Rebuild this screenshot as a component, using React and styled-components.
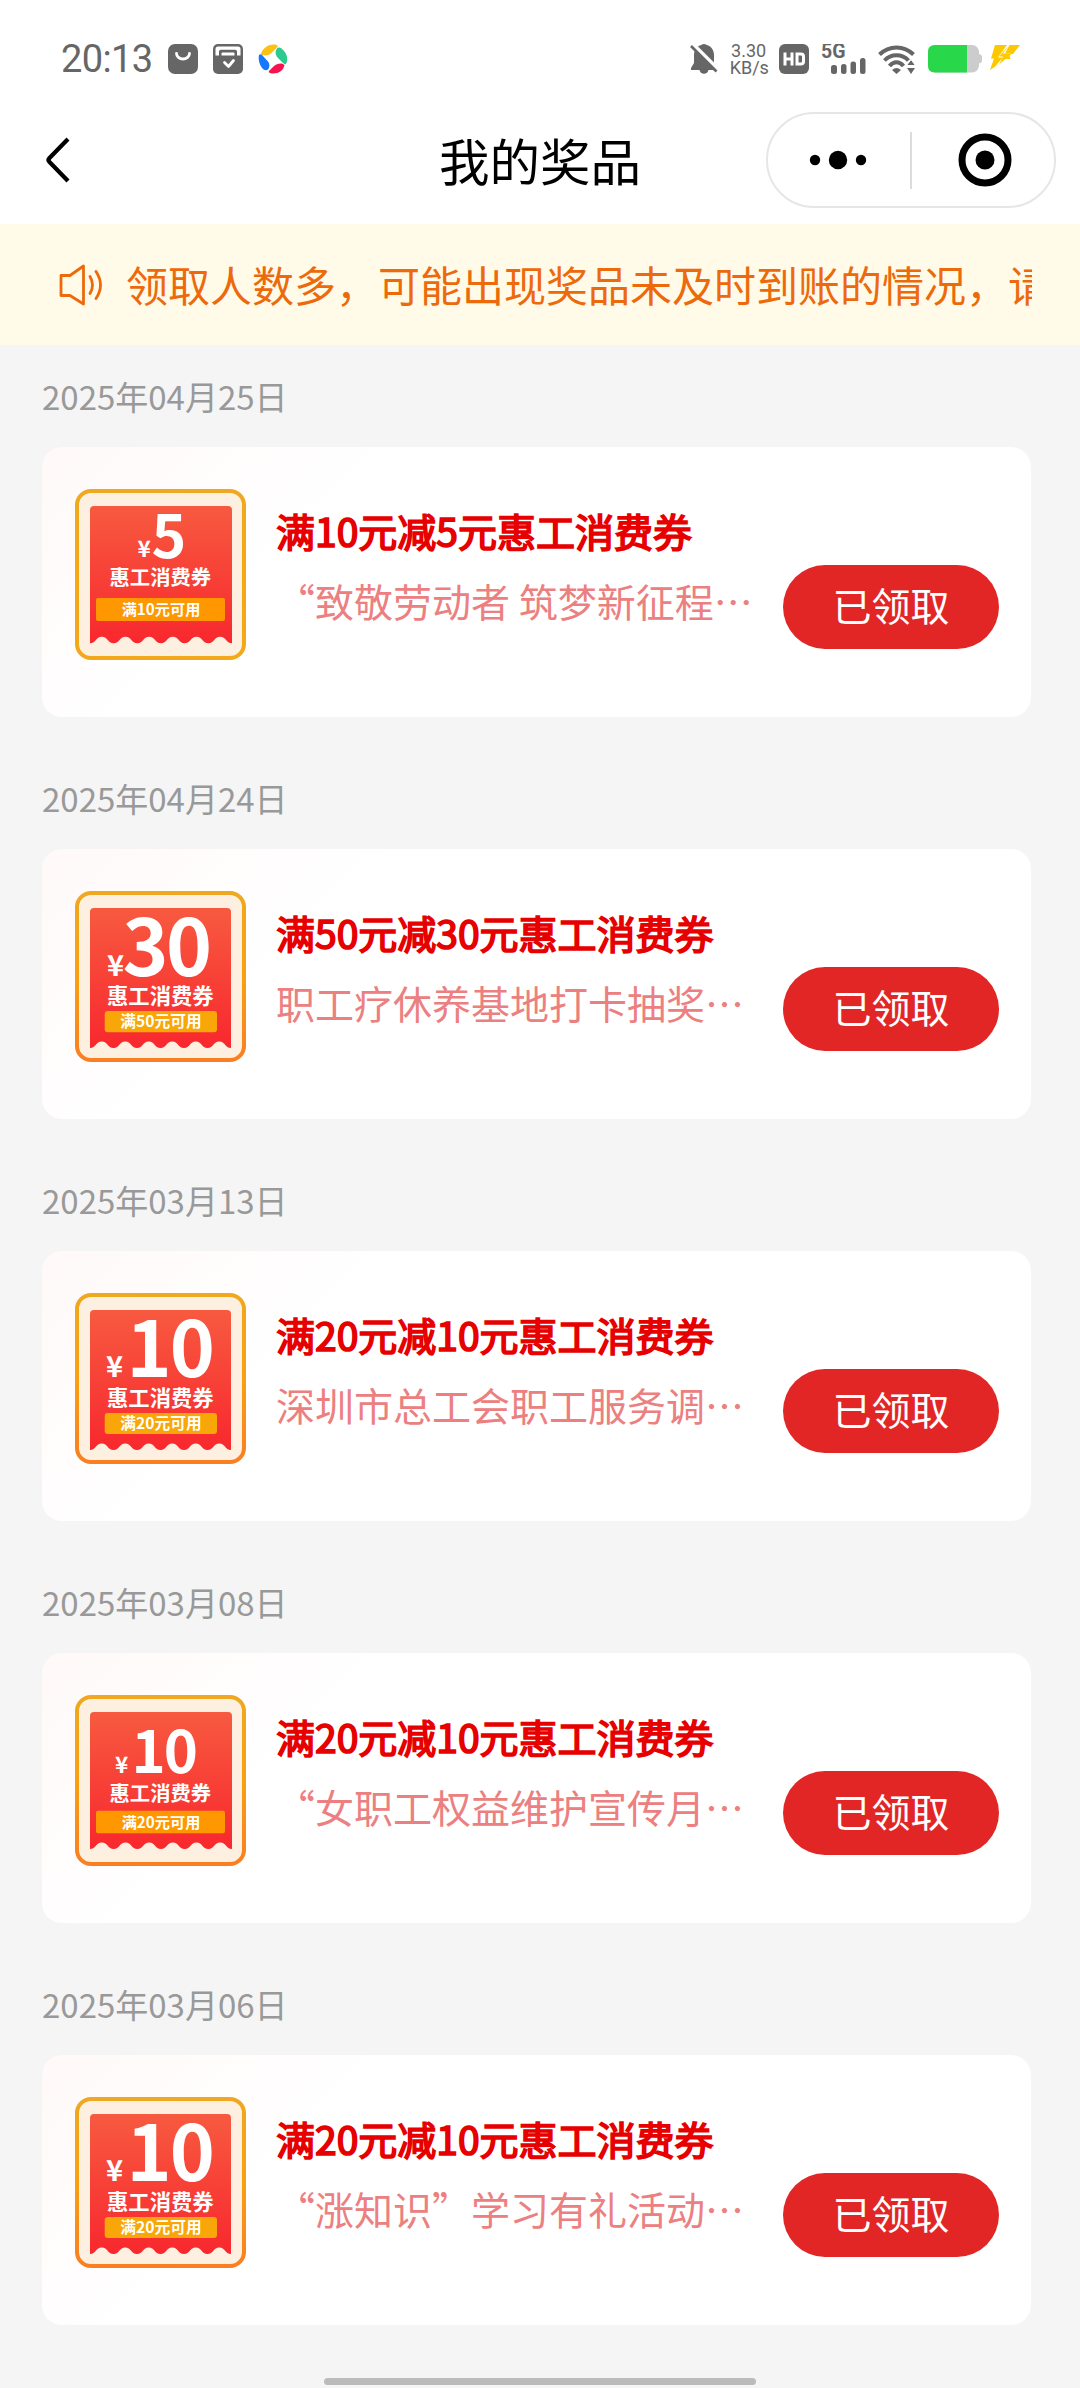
import React from 'react';
import styled, { createGlobalStyle } from 'styled-components';

const cjk = '"Noto Sans CJK SC", "Noto Sans", sans-serif';

const GlobalStyle = createGlobalStyle`
  * {
    box-sizing: border-box;
  }

  body {
    margin: 0;
    background: #f5f5f5;
    font-family: ${cjk};
  }

  svg {
    display: block;
    flex-shrink: 0;
  }
`;

const Page = styled.div`
  display: flex;
  flex-direction: column;
  width: 1080px;
  height: 2388px;
  overflow: hidden;
  background: #f5f5f5;
`;

const StatusBar = styled.div`
  display: flex;
  align-items: center;
  justify-content: space-between;
  height: 96px;
  padding: 22px 60px 0 61px;
  background: #fff;
  color: #666;
`;

const StatusGroup = styled.div`
  display: flex;
  align-items: center;
  gap: ${props => props.$gap}px;
`;

const PowerGroup = styled.div`
  display: flex;
  align-items: center;
  gap: 8px;
`;

const Clock = styled.div`
  width: 92px;
  font-family: Roboto, sans-serif;
  font-size: 38px;
  line-height: 40px;
  letter-spacing: -0.6px;
`;

const NetSpeed = styled.div`
  width: 38px;
  font-family: Roboto, sans-serif;
  font-size: 18px;
  line-height: 17px;
  text-align: center;
  white-space: nowrap;
`;

const NavBar = styled.div`
  display: grid;
  grid-template-columns: 1fr auto 1fr;
  align-items: center;
  height: 128px;
  padding: 0 24px 0 44px;
  background: #fff;
`;

const NavTitle = styled.div`
  padding: 0 20px 2px 0;
  font-size: 50.5px;
  line-height: 72px;
  color: #000;
`;

const Capsule = styled.div`
  display: flex;
  align-items: center;
  justify-self: end;
  width: 290px;
  height: 96px;
  border: 2px solid #e6e6e6;
  border-radius: 48px;
`;

const CapsuleHalf = styled.div`
  display: flex;
  flex: 1;
  align-items: center;
  justify-content: center;
  padding: ${props => props.$pad};
`;

const CapsuleLine = styled.div`
  width: 2px;
  height: 57px;
  background: #dcdcdc;
`;

const Notice = styled.div`
  display: flex;
  align-items: center;
  height: 121px;
  padding: 0 48px 0 58px;
  background: #fffbe8;
  color: #ed6a0c;
`;

const NoticeText = styled.div`
  flex: 1;
  margin-left: 20px;
  padding-bottom: 2px;
  overflow: hidden;
  white-space: nowrap;
  font-size: 42px;
  line-height: 62px;
`;

const PrizeList = styled.div`
  display: flex;
  flex-direction: column;
  gap: 56px;
  padding: 26px 49px 0 42px;
`;

const Day = styled.div`
  display: flex;
  flex-direction: column;
  gap: 26px;
`;

const DayLabel = styled.div`
  font-size: 33px;
  line-height: 50px;
  color: #999;
`;

const Card = styled.div`
  display: flex;
  align-items: flex-start;
  height: 270px;
  padding: 42px 32px 0 33px;
  border-radius: 20px;
  background: linear-gradient(135deg, #fff9f9 0%, #fff 28%);
`;

const CardInfo = styled.div`
  display: flex;
  flex: 1;
  flex-direction: column;
  gap: 14px;
  min-width: 0;
  padding: 13px 0 0 30px;
`;

const CardTitle = styled.div`
  font-size: 39px;
  line-height: 56px;
  white-space: nowrap;
  color: #e60000;
  -webkit-text-stroke: 1.7px #e60000;
`;

const CardDesc = styled.div`
  font-size: 39px;
  line-height: 56px;
  white-space: nowrap;
  color: #ec8080;
`;

const ClaimedButton = styled.button`
  flex-shrink: 0;
  width: 216px;
  height: 84px;
  margin-top: 76px;
  padding: 0 0 5px;
  border: none;
  border-radius: 42px;
  background: #e22626;
  color: #fff;
  font-family: ${cjk};
  font-size: 39px;
  line-height: 79px;
`;

const Footer = styled.div`
  display: flex;
  justify-content: center;
  margin-top: 53px;
`;

const HomeBar = styled.div`
  width: 432px;
  height: 7px;
  border-radius: 4px;
  background: #bbb;
`;

const BadgeText = styled.text`
  font-family: ${cjk};
  font-weight: 700;
  fill: #fff;
`;

// the coupon pictures, all on a 171 x 171 board
const artworks = {
  single: {
    bottom: 154.3, right: 157, stroke: '#f3a81c', band: '#ff9800',
    yen: { x: 62.5, y: 68, size: 22.5 }, amount: { x: 76.5, y: 68.8, size: 59, spacing: 0 },
    label: { y: 96, size: 20.3 }, rect: { x: 21, y: 109, w: 129, h: 23, r: 2 }, cond: { y: 126, size: 15.2 },
  },
  large30: {
    bottom: 157, right: 156, stroke: '#f97f22', band: '#f8a608',
    yen: { x: 32, y: 85, size: 29 }, amount: { x: 47.5, y: 85, size: 78, spacing: -2.5 },
    label: { y: 113.2, size: 21.3 }, rect: { x: 29.7, y: 120, w: 112.3, h: 21.3, r: 3 }, cond: { y: 136, size: 15.7 },
  },
  large10: {
    bottom: 157, right: 156, stroke: '#f97f22', band: '#f8a608',
    yen: { x: 31, y: 83.7, size: 29 }, amount: { x: 51.5, y: 84, size: 76.5, spacing: -2 },
    label: { y: 112.5, size: 21.3 }, rect: { x: 29.7, y: 120, w: 112.3, h: 21, r: 3 }, cond: { y: 135.5, size: 15.7 },
  },
  small10: {
    bottom: 154, right: 157, stroke: '#f97f22', band: '#ff9800',
    yen: { x: 40, y: 77.7, size: 22.5 }, amount: { x: 56.5, y: 78, size: 58, spacing: -2 },
    label: { y: 106, size: 20.3 }, rect: { x: 21, y: 115.7, w: 129, h: 22.5, r: 2 }, cond: { y: 132.8, size: 15.2 },
  },
};

const prizes = [
  { date: '2025年04月25日', title: '满10元减5元惠工消费券', desc: '“致敬劳动者 筑梦新征程…', art: 'single', amount: '5', cond: '满10元可用' },
  { date: '2025年04月24日', title: '满50元减30元惠工消费券', desc: '职工疗休养基地打卡抽奖…', art: 'large30', amount: '30', cond: '满50元可用' },
  { date: '2025年03月13日', title: '满20元减10元惠工消费券', desc: '深圳市总工会职工服务调…', art: 'large10', amount: '10', cond: '满20元可用' },
  { date: '2025年03月08日', title: '满20元减10元惠工消费券', desc: '“女职工权益维护宣传月…', art: 'small10', amount: '10', cond: '满20元可用' },
  { date: '2025年03月06日', title: '满20元减10元惠工消费券', desc: '“涨知识”学习有礼活动…', art: 'large10', amount: '10', cond: '满20元可用' },
];

// ticket with a wavy lower edge, six waves wide
const ticketPath = (right, bottom) => {
  const step = (right - 15) / 6;
  let d = `M15 ${bottom}V21Q15 17 19 17H${right - 4}Q${right} 17 ${right} 21V${bottom}`;
  for (let i = 0; i < 6; i++) {
    d += `c${-step * 0.25} 0 ${-step * 0.25} -6.5 ${-step / 2} -6.5s${-step * 0.25} 6.5 ${-step / 2} 6.5`;
  }
  return d + 'z';
};

const CouponBadge = ({ id, art, amount, cond }) => {
  const a = artworks[art];
  return (
    <svg width="171" height="171" viewBox="0 0 171 171">
      <defs>
        <linearGradient id={`edge${id}`} x1="0" y1="0" x2="0" y2="1">
          <stop offset="0" stopColor="#efa820" />
          <stop offset="0.5" stopColor={art === 'single' ? '#f6a814' : '#f9a010'} />
          <stop offset="1" stopColor={a.stroke} />
        </linearGradient>
        <linearGradient id={`red${id}`} x1="0" y1="0" x2="0" y2="1">
          <stop offset="0" stopColor="#f75a40" />
          <stop offset="1" stopColor="#f8282e" />
        </linearGradient>
      </defs>
      <rect x="2" y="2" width="167" height="167" rx="14" fill="#fef0e0" stroke={`url(#edge${id})`} strokeWidth="4" />
      <path d={ticketPath(a.right, a.bottom)} fill={`url(#red${id})`} />
      <BadgeText x={a.yen.x} y={a.yen.y} fontSize={a.yen.size}>¥</BadgeText>
      <BadgeText x={a.amount.x} y={a.amount.y} fontSize={a.amount.size} letterSpacing={a.amount.spacing}>{amount}</BadgeText>
      <BadgeText x="85.3" y={a.label.y} fontSize={a.label.size} textAnchor="middle">惠工消费券</BadgeText>
      <rect x={a.rect.x} y={a.rect.y} width={a.rect.w} height={a.rect.h} rx={a.rect.r} fill={a.band} />
      <BadgeText x="86" y={a.cond.y} fontSize={a.cond.size} textAnchor="middle">{cond}</BadgeText>
    </svg>
  );
};

const BagIcon = () => (
  <svg width="30" height="30" viewBox="0 0 30 30">
    <rect width="30" height="30" rx="7" fill="#666" />
    <path d="M8.5 9.5a6.5 5.5 0 0 0 13 0" fill="none" stroke="#fff" strokeWidth="2.8" strokeLinecap="round" />
  </svg>
);

const WalletIcon = () => (
  <svg width="30" height="30" viewBox="0 0 30 30">
    <rect width="30" height="30" rx="5" fill="#666" />
    <path d="M2.5 11.5V5A2.5 2.5 0 0 1 5 2.5h20A2.5 2.5 0 0 1 27.500 5v6.500H24v-4a1.800 1.800 0 0 0-1.800-1.800H7.800A1.800 1.800 0 0 0 6 7.500v4z" fill="#fff" />
    <path d="M8.500 11.500v-2q0-1 1-1h11q1 0 1 1v2z" fill="#fff" />
    <path d="M11.500 18.500l4 4 5-6" fill="none" stroke="#fff" strokeWidth="2.800" strokeLinecap="round" strokeLinejoin="round" />
  </svg>
);

const SwirlIcon = () => (
  <svg width="30" height="30" viewBox="0 0 30 30">
    <path d="M3 10C4 5 10 0 16 .5c3 .2 4.500 1.500 3.500 2.500L14 8.500C11 11.500 5 12.500 3 10z" fill="#fcc20f" />
    <path d="M19 4.500c1-1.500 3-1.200 4.500 0 5 4 7 9.500 5 14.500-1 2-2.500 1-3.500 0l-5-5c-3-3-3-7-1-9.500z" fill="#2bcb8f" />
    <path d="M26.500 21c-1 5-5.500 8.500-11.500 8.500-3 0-5-1.300-4-2.500l5-5c3-3 8.500-3.500 10.500-1z" fill="#f7134f" />
    <path d="M1 11c1-1.200 2.500-.5 3.500.5L9.500 17c2.500 2.500 2.500 6 .5 8.500-2 1.500-4 .5-5.500-1C1.500 21 0 15 1 11z" fill="#1677ff" />
  </svg>
);

const BellOffIcon = () => (
  <svg width="28" height="30" viewBox="0 0 28 30">
    <path d="M14 0c1.700 0 2.500.8 2.700 1C21 2.200 24 6 24 11v8l3 5v2h-8.500a4.600 4.600 0 0 1-9 0H1v-2l3-5v-8C4 6 7 2.200 11.300 1 11.500.8 12.300 0 14 0z" fill="#666" />
    <path d="M1 -1L28 26" stroke="#fff" strokeWidth="5" />
    <path d="M1 2L26.500 27.500" stroke="#666" strokeWidth="2.600" />
  </svg>
);

const HdIcon = () => (
  <svg width="30" height="30" viewBox="0 0 30 30">
    <rect width="30" height="30" rx="6" fill="#666" />
    <path d="M6 8.500v13M13 8.500v13M6 15h7M18 10h4q2.500 0 2.500 2.500v5q0 2.500-2.500 2.500h-4z" fill="none" stroke="#fff" strokeWidth="3" />
  </svg>
);

const SignalLabel = styled.text`
  font-family: Roboto, sans-serif;
  font-size: 19.5px;
  font-weight: 700;
  fill: #666;
`;

const SignalIcon = () => (
  <svg width="46" height="30" viewBox="0 0 46 30">
    <SignalLabel x="0" y="14.300">5G</SignalLabel>
    <rect x="10" y="21" width="6" height="9" rx="2.500" fill="#666" />
    <rect x="20" y="20" width="5.500" height="10" rx="2.500" fill="#666" />
    <rect x="29.500" y="17.500" width="5.500" height="12.500" rx="2.500" fill="#666" />
    <rect x="39" y="14" width="5.500" height="16" rx="2.500" fill="#666" />
  </svg>
);

const WifiIcon = () => (
  <svg width="38" height="30" viewBox="0 0 38 30">
    <g fill="none" stroke="#666" strokeWidth="4">
      <path d="M1.500 10.500C11 1 26 1 35.500 10.500" />
      <path d="M6.500 16.500C13 9.500 24 9.500 30.500 16.500" />
      <path d="M11.500 22C15.500 17 21.500 17 25.500 22" />
    </g>
    <path d="M14 26q4.500-4 9 0l-4.500 4z" fill="#666" />
    <path d="M33 15.500l4.500 6h-9z" stroke="#fff" strokeWidth="1" fill="#666" />
    <path d="M33 30l-4-6h8z" fill="#666" />
  </svg>
);

const BatteryIcon = () => (
  <svg width="54" height="28" viewBox="0 0 54 28">
    <rect width="51" height="27.500" rx="7" fill="#ccc" />
    <path d="M50 9q4 0 4 3v3.500q0 3-4 3z" fill="#ccc" />
    <path d="M7 0h32v27.500H7q-7 0-7-7V7q0-7 7-7z" fill="#29d84a" />
  </svg>
);

const BoltIcon = () => (
  <svg width="30" height="28" viewBox="0 0 30 28">
    <path d="M5 0h25l-7 9h-4l1.500 5h-4L0 25l4-11.500H1z" fill="#fcc800" />
    <path d="M17 0L8 12.500h5L5 21.500 17.500 14H14l7-5.500h-6L19.500 0z" fill="#fff" />
    <path d="M18.500 1L13 8.500h9L9.500 19l3.500-7.500h-4z" fill="#fcc800" />
  </svg>
);

const BackIcon = () => (
  <svg width="28" height="48" viewBox="0 0 28 48">
    <path d="M24 3L5.500 22q-2 2 0 4L24 45" fill="none" stroke="#000" strokeWidth="4.200" />
  </svg>
);

const SpeakerIcon = () => (
  <svg width="48" height="44" viewBox="0 0 48 44" fill="none" stroke="#ed6a0c" strokeWidth="2.800" strokeLinejoin="round">
    <path d="M3 12.500h9L25.500 3v38L12 32.500H3z" />
    <path d="M32 13.500q5 8.500 0 17" strokeLinecap="round" />
    <path d="M38 8.500q9 13.500 0 27" strokeLinecap="round" />
  </svg>
);

const App = () => (
  <Page lang="zh-CN">
    <GlobalStyle />
    <StatusBar>
      <StatusGroup $gap={15}>
        <Clock>20:13</Clock>
        <BagIcon />
        <WalletIcon />
        <SwirlIcon />
      </StatusGroup>
      <StatusGroup $gap={11.6}>
        <BellOffIcon />
        <NetSpeed>3.30<br />KB/s</NetSpeed>
        <HdIcon />
        <SignalIcon />
        <WifiIcon />
        <PowerGroup>
          <BatteryIcon />
          <BoltIcon />
        </PowerGroup>
      </StatusGroup>
    </StatusBar>
    <NavBar>
      <BackIcon />
      <NavTitle>我的奖品</NavTitle>
      <Capsule>
        <CapsuleHalf $pad="0 3px 0 0">
          <svg width="58" height="20" viewBox="0 0 58 20">
            <circle cx="6" cy="10" r="5.200" />
            <circle cx="29" cy="10" r="9.200" />
            <circle cx="52" cy="10" r="5.200" />
          </svg>
        </CapsuleHalf>
        <CapsuleLine />
        <CapsuleHalf $pad="0 0 0 3px">
          <svg width="54" height="54" viewBox="0 0 54 54">
            <circle cx="27" cy="27" r="23" fill="none" stroke="#000" strokeWidth="7" />
            <circle cx="27" cy="27" r="9.500" />
          </svg>
        </CapsuleHalf>
      </Capsule>
    </NavBar>
    <Notice>
      <SpeakerIcon />
      <NoticeText>领取人数多，可能出现奖品未及时到账的情况，请耐心等待</NoticeText>
    </Notice>
    <PrizeList>
      {prizes.map((prize, index) => (
        <Day key={prize.date}>
          <DayLabel>{prize.date}</DayLabel>
          <Card>
            <CouponBadge id={index} art={prize.art} amount={prize.amount} cond={prize.cond} />
            <CardInfo>
              <CardTitle>{prize.title}</CardTitle>
              <CardDesc>{prize.desc}</CardDesc>
            </CardInfo>
            <ClaimedButton>已领取</ClaimedButton>
          </Card>
        </Day>
      ))}
    </PrizeList>
    <Footer>
      <HomeBar />
    </Footer>
  </Page>
);

export default App;
